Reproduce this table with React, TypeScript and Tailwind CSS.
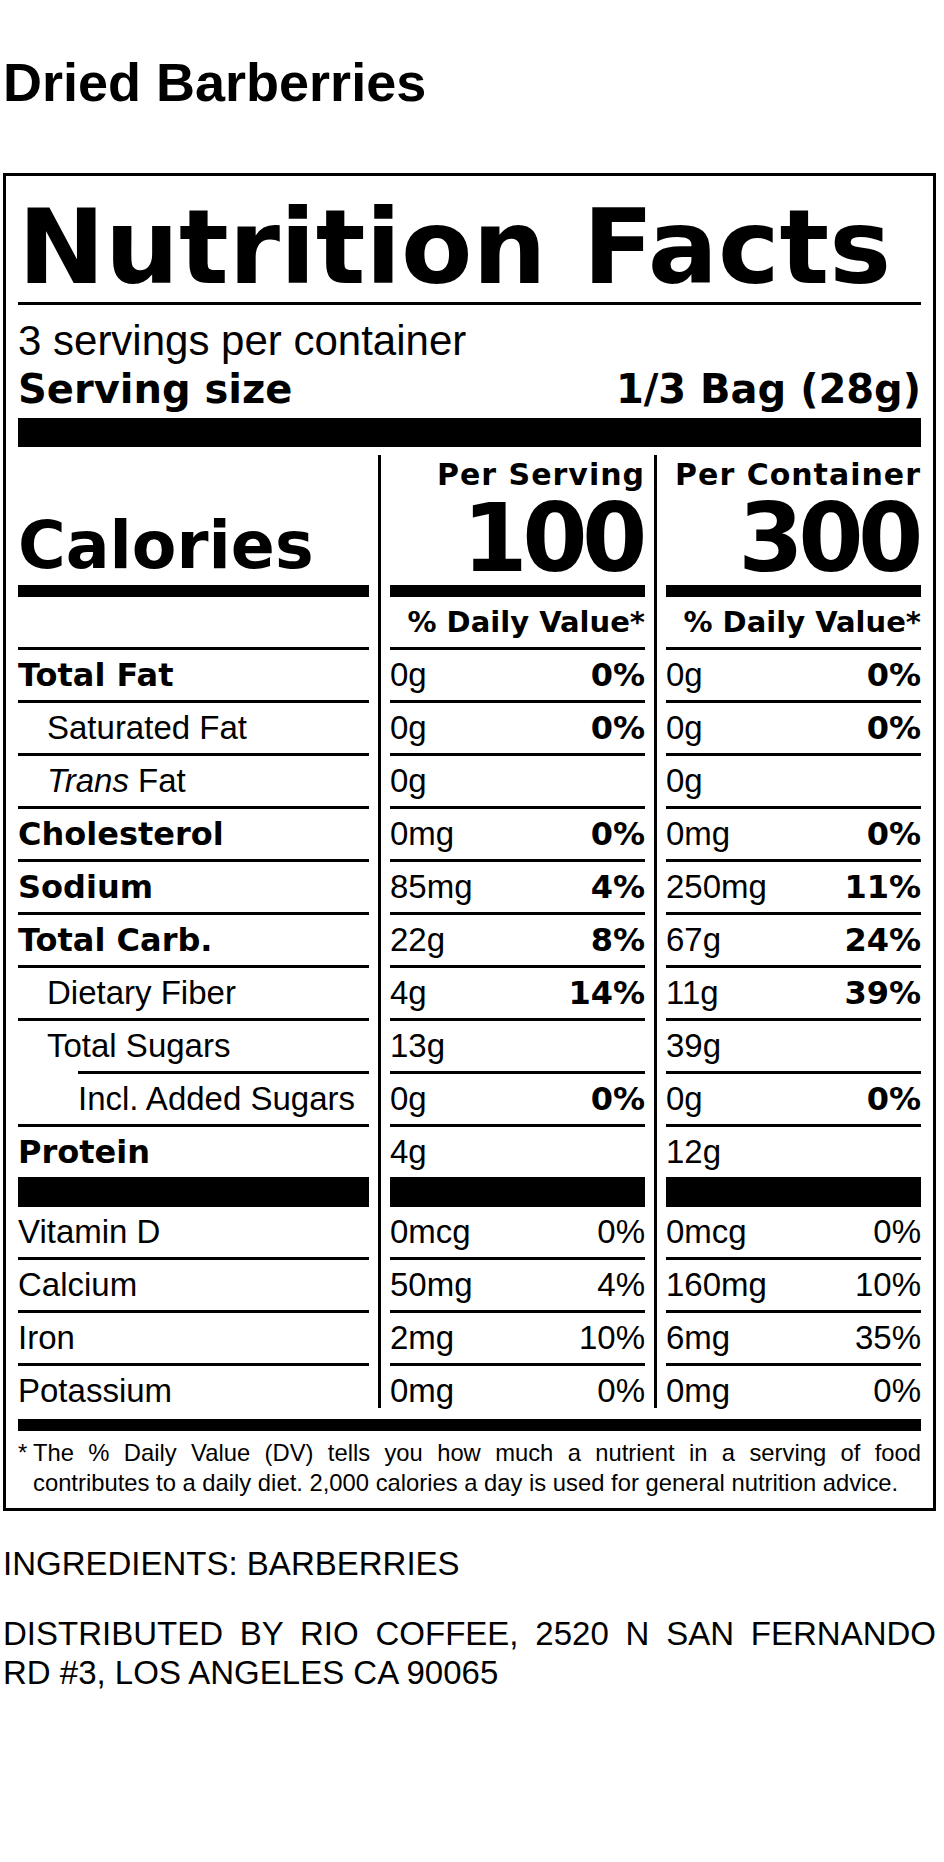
import React from "react";

// heavy face for the label headings, regular text is Liberation Sans (Helvetica widths)
const HEAVY = "[font-family:'DejaVu_Sans',sans-serif] font-bold";

type Nutrient = {
  label: React.ReactNode;
  bold?: boolean;
  indent?: number;
  serv: [string, string?];
  cont: [string, string?];
  shortLine?: boolean;
};

const nutrients: Nutrient[] = [
  { label: "Total Fat", bold: true, serv: ["0g", "0%"], cont: ["0g", "0%"] },
  { label: "Saturated Fat", indent: 1, serv: ["0g", "0%"], cont: ["0g", "0%"] },
  { label: <><i>Trans</i> Fat</>, indent: 1, serv: ["0g"], cont: ["0g"] },
  { label: "Cholesterol", bold: true, serv: ["0mg", "0%"], cont: ["0mg", "0%"] },
  { label: "Sodium", bold: true, serv: ["85mg", "4%"], cont: ["250mg", "11%"] },
  { label: "Total Carb.", bold: true, serv: ["22g", "8%"], cont: ["67g", "24%"] },
  { label: "Dietary Fiber", indent: 1, serv: ["4g", "14%"], cont: ["11g", "39%"] },
  { label: "Total Sugars", indent: 1, serv: ["13g"], cont: ["39g"], shortLine: true },
  { label: "Incl. Added Sugars", indent: 2, serv: ["0g", "0%"], cont: ["0g", "0%"] },
];

const vitamins = [
  { label: "Vitamin D", serv: ["0mcg", "0%"], cont: ["0mcg", "0%"] },
  { label: "Calcium", serv: ["50mg", "4%"], cont: ["160mg", "10%"] },
  { label: "Iron", serv: ["2mg", "10%"], cont: ["6mg", "35%"] },
  { label: "Potassium", serv: ["0mg", "0%"], cont: ["0mg", "0%"] },
];

function Line({ short }: { short?: boolean }) {
  return <div className={short ? "ml-[60px] h-[3px] bg-black" : "h-[3px] bg-black"} />;
}

function LabelColumn() {
  return (
    <div className="flex w-[351px] flex-col">
      <div className="flex h-[130px] items-end pb-[7px]">
        <span className={`${HEAVY} text-[65px] leading-[65px]`}>Calories</span>
      </div>
      <div className="h-[12px] bg-black" />
      <div className="h-[50px]" />
      <Line />
      {nutrients.map((n, i) => (
        <div key={i}>
          <div
            className={`h-[50px] leading-[50px] whitespace-nowrap ${n.bold ? `${HEAVY} text-[32px]` : "text-[33px]"} ${
              n.indent === 2 ? "pl-[60px]" : n.indent === 1 ? "pl-[29px]" : ""
            }`}
          >
            {n.label}
          </div>
          <Line short={n.shortLine} />
        </div>
      ))}
      <div className={`${HEAVY} h-[50px] text-[32px] leading-[50px]`}>Protein</div>
      <div className="h-[30px] bg-black" />
      {vitamins.map((v, i) => (
        <div key={v.label}>
          <div className={`${i === 3 ? "h-[42px]" : "h-[50px]"} text-[33px] leading-[50px]`}>{v.label}</div>
          {i < 3 && <Line />}
        </div>
      ))}
    </div>
  );
}

function ValueColumn({ title, calories, which }: { title: string; calories: string; which: "serv" | "cont" }) {
  return (
    <div className="flex w-[255px] flex-col">
      <div className="flex h-[130px] flex-col items-end pt-[5px]">
        <div className={`${HEAVY} text-[30px] leading-[30px] tracking-[1px] whitespace-nowrap`}>{title}</div>
        <div className={`${HEAVY} mt-[9px] mr-[3px] text-[94px] leading-[80px] tracking-[-5.5px]`}>{calories}</div>
      </div>
      <div className="h-[12px] bg-black" />
      <div className={`${HEAVY} h-[50px] text-right text-[29px] leading-[50px] whitespace-nowrap`}>% Daily Value*</div>
      <Line />
      {nutrients.map((n, i) => {
        const [amt, dv] = n[which];
        return (
          <div key={i}>
            <div className="flex h-[50px] justify-between leading-[50px]">
              <span className="text-[33px]">{amt}</span>
              {dv && <span className={`${HEAVY} text-[32px]`}>{dv}</span>}
            </div>
            <Line />
          </div>
        );
      })}
      <div className="h-[50px] text-[33px] leading-[50px]">{which === "serv" ? "4g" : "12g"}</div>
      <div className="h-[30px] bg-black" />
      {vitamins.map((v, i) => (
        <div key={v.label}>
          <div className={`flex ${i === 3 ? "h-[42px]" : "h-[50px]"} justify-between text-[33px] leading-[50px]`}>
            <span>{v[which][0]}</span>
            <span>{v[which][1]}</span>
          </div>
          {i < 3 && <Line />}
        </div>
      ))}
    </div>
  );
}

export default function App() {
  return (
    <div className="min-h-[1862px] bg-white text-black [font-family:'Liberation_Sans',Arial,sans-serif]">
      <div className="ml-[3px] w-[933px] pt-[52px]">
        <h1 className="text-[54px] leading-[60px] font-bold">Dried Barberries</h1>

        {/* Nutrition label */}
        <div className="mt-[61px] border-[3px] border-black px-[12px] pt-[19px] pb-[10px]">
          <div className={`${HEAVY} text-[104px] leading-[104px] whitespace-nowrap`}>Nutrition Facts</div>
          <div className="mt-[3px] h-[3px] bg-black" />
          <div className="mt-[13px] text-[42px] leading-[46px]">3 servings per container</div>
          <div className={`${HEAVY} mt-[3px] flex justify-between text-[40px] leading-[44px]`}>
            <span>Serving size</span>
            <span>1/3 Bag (28g)</span>
          </div>
          <div className="mt-[7px] h-[29px] bg-black" />

          <div className="mt-[8px] flex">
            <LabelColumn />
            <div className="mx-[9px] w-[3px] bg-black" />
            <ValueColumn title="Per Serving" calories="100" which="serv" />
            <div className="mx-[9px] w-[3px] bg-black" />
            <ValueColumn title="Per Container" calories="300" which="cont" />
          </div>

          <div className="mt-[11px] h-[12px] bg-black" />
          <p className="mt-[7px] pl-[15px] indent-[-15px] text-justify text-[23.8px] leading-[30px]">
            <span className="inline-block w-[15px] indent-0">*</span>The % Daily Value (DV) tells you how much a
            nutrient in a serving of food contributes to a daily diet. 2,000 calories a day is used for general
            nutrition advice.
          </p>
        </div>

        <p className="mt-[33px] text-[33px] leading-[39px]">INGREDIENTS: BARBERRIES</p>
        <p className="mt-[31px] text-justify text-[33px] leading-[39px]">
          DISTRIBUTED BY RIO COFFEE, 2520 N SAN FERNANDO RD #3, LOS ANGELES CA 90065
        </p>
      </div>
    </div>
  );
}
